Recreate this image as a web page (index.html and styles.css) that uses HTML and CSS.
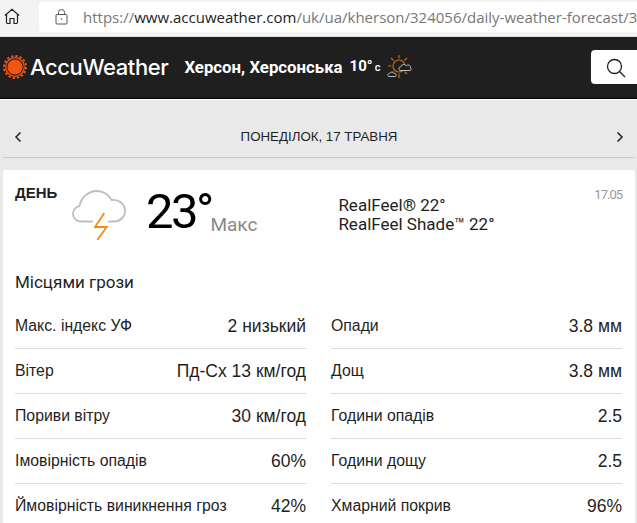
FILE: index.html
```html
<!DOCTYPE html>
<html lang="uk">
<head>
<meta charset="utf-8">
<title>AccuWeather</title>
<link rel="stylesheet" href="styles.css">
</head>
<body>
<div class="browser">
  <svg class="home" width="16" height="17" viewBox="0 0 16 17" fill="none" stroke="#222" stroke-width="1.2"><path d="M1 7.500 8 1.200l7 6.300M2.500 6.500v7.600a1.400 1.400 0 0 0 1.400 1.400H6v-5h4v5h2.100a1.400 1.400 0 0 0 1.400-1.400V6.500"/></svg>
  <div class="address">
    <svg class="lock" width="13" height="16" viewBox="0 0 13 16" fill="none" stroke="#555" stroke-width="1"><rect x="1" y="5.500" width="11" height="9.500" rx="1"/><path d="M3.500 5.500V3.500a3 3 0 0 1 6 0v2"/><circle cx="6.500" cy="10" r=".8" fill="#555" stroke="none"/></svg>
    <span class="url"><span class="url-dim">https://</span>www.accuweather.com<span class="url-dim">/uk/ua/kherson/324056/daily-weather-forecast/3</span></span>
  </div>
</div>
<header class="site-header">
  <svg class="logo-sun" width="26" height="26" viewBox="0 0 26 26"><circle cx="13" cy="13" r="7.600" fill="#f05514"/><circle cx="13" cy="13" r="9.300" fill="none" stroke="#f05514" stroke-width="1.300"/><circle cx="13" cy="13" r="11" fill="none" stroke="#f05514" stroke-width="2" stroke-dasharray="2.300 2.020"/></svg>
  <span class="logo-text">AccuWeather</span>
  <span class="location">Херсон, Херсонська</span>
  <span class="temp">10°<small>c</small></span>
  <svg class="mini-icon" width="26" height="26" viewBox="0 0 26 26" fill="none"><g stroke="#c46a0c" stroke-width="1.200"><circle cx="12" cy="12" r="6"/><path d="M12 1v3.500M12 19.500V24M1 12h3.500M4 4l2.500 2.500M20 4l-2.500 2.500M4 20l2.500-2.500M20 20l-2.500-2.500"/></g><path d="M13 16.500a2 2 0 0 1 .8-3.800 3 3 0 0 1 5.500-.8 2.300 2.300 0 0 1 4 2.200 1.300 1.300 0 0 1 .2 2.400z" fill="#1f1f1f" stroke="#bbb"/><path d="M1.500 22.500a1.500 1.500 0 0 1 .8-2.800 2.500 2.500 0 0 1 4.500-.3 1.600 1.600 0 0 1 1.500 3.100z" fill="#1f1f1f" stroke="#bbb"/></svg>
  <div class="search">
    <svg width="20" height="20" viewBox="0 0 20 20" fill="none" stroke="#1f1f1f" stroke-width="1.300"><circle cx="8.500" cy="8.500" r="7"/><path d="m13.500 13.500 5.500 5.500"/></svg>
  </div>
</header>
<main class="page">
  <nav class="day-nav">
    <svg width="8" height="12" viewBox="0 0 8 12" fill="none" stroke="#222" stroke-width="1.500"><path d="M6.500 1.500 2 6l4.500 4.500"/></svg>
    <span class="day-title">ПОНЕДІЛОК, 17 ТРАВНЯ</span>
    <svg width="8" height="12" viewBox="0 0 8 12" fill="none" stroke="#222" stroke-width="1.500"><path d="M1.500 1.500 6 6l-4.500 4.500"/></svg>
  </nav>
  <section class="card">
    <div class="card-head">
      <span class="day-label">ДЕНЬ</span>
      <svg class="storm" width="54" height="52" viewBox="0 0 54 52" fill="none"><path d="M20 31.500H8.500A7.700 7.700 0 0 1 7.500 16.200C9 7 17 1 25 1c6 0 12 3.500 14.500 9C47 9 53 14 53 21c0 6-5 10.500-11 10.500h-5" stroke="#bdbdbd" stroke-width="1.800" stroke-linecap="round"/><path d="M32.300 23 23 37h11.700L25.300 50" stroke="#f58a0b" stroke-width="1.800"/></svg>
      <span class="big-temp">23°</span>
      <span class="max">Макс</span>
      <div class="realfeel">RealFeel® 22°<br>RealFeel Shade™ 22°</div>
      <span class="date">17.05</span>
    </div>
    <p class="phrase">Місцями грози</p>
    <div class="panels">
      <div class="panel">
        <div class="row"><span class="key">Макс. індекс УФ</span><span class="val">2 низький</span></div>
        <div class="row"><span class="key">Вітер</span><span class="val">Пд-Сх 13 км/год</span></div>
        <div class="row"><span class="key">Пориви вітру</span><span class="val">30 км/год</span></div>
        <div class="row"><span class="key">Імовірність опадів</span><span class="val">60%</span></div>
        <div class="row"><span class="key">Ймовірність виникнення гроз</span><span class="val">42%</span></div>
      </div>
      <div class="panel">
        <div class="row"><span class="key">Опади</span><span class="val">3.8 мм</span></div>
        <div class="row"><span class="key">Дощ</span><span class="val">3.8 мм</span></div>
        <div class="row"><span class="key">Години опадів</span><span class="val">2.5</span></div>
        <div class="row"><span class="key">Години дощу</span><span class="val">2.5</span></div>
        <div class="row"><span class="key">Хмарний покрив</span><span class="val">96%</span></div>
      </div>
    </div>
  </section>
</main>
</body>
</html>
```
FILE: styles.css
```css
* { box-sizing: border-box; }
html, body { margin: 0; height: 523px; overflow: hidden; }
body { background: #e9e9e9; font-family: "Liberation Sans", Arial, sans-serif; color: #1f1f1f; }

.browser { height: 37px; background: #f3f3f3; display: flex; align-items: flex-start; padding: 2px 0 0 3px; border-bottom: 1px solid #dcdcdc; }
.home { margin: 6px 0 0 1px; flex: none; }
.address { margin-left: 19px; flex: 1; min-width: 0; overflow: hidden; height: 30px; background: #fff; border-radius: 4px 0 0 4px; display: flex; align-items: center; padding-left: 16px; }
.lock { flex: none; }
.url { margin-left: 15px; font: 15px/20px "Open Sans", sans-serif; color: #222; white-space: nowrap; }
.url-dim { color: #777; }

.site-header { height: 63px; background: #1f1f1f; border-bottom: 1px solid #fff; display: flex; align-items: center; padding: 0 0 2px 2px; box-shadow: inset 0 -1px 0 #000; color: #fff; }
.logo-sun { flex: none; }
.logo-text { margin-left: 2px; font: 500 22px/30px Inter, sans-serif; letter-spacing: -.4px; }
.location { margin-left: 16px; font: 700 16.800px/20px Roboto, sans-serif; }
.temp { margin-left: 7px; font: 700 15px/20px Roboto, sans-serif; }
.temp small { margin-left: 2px; font-size: 11px; font-weight: 500; }
.mini-icon { margin-left: 7px; flex: none; }
.search { margin-left: auto; width: 46px; height: 34px; background: #fff; border-radius: 4px 0 0 4px; padding: 8px 0 0 15px; }

.page { padding: 0 2px 0 3px; }
.day-nav { height: 58px; border-bottom: 1px solid #c9c9c9; display: flex; align-items: center; justify-content: space-between; padding: 17px 11px 0 11px; }
.day-title { font: 13.300px/18px "Liberation Sans", sans-serif; color: #1f1f1f; }
.card { margin-top: 12px; background: #fff; border-radius: 2px 2px 0 0; padding: 0 13px 0 12px; }
.card-head { position: relative; height: 92px; display: flex; align-items: flex-start; }
.day-label { margin-top: 15px; font: 700 15px/16px "Liberation Sans", sans-serif; width: 57px; }
.storm { margin-top: 20px; flex: none; }
.big-temp { margin: 17px 0 0 20px; font: 400 49px/50px Roboto, sans-serif; letter-spacing: -2.500px; color: #000; }
.max { margin: 43px 0 0 -1.500px; font: 19px/24px Roboto, sans-serif; color: #888; }
.realfeel { margin: 26px 0 0 81px; font: 17px/19px Roboto, sans-serif; }
.date { position: absolute; top: 17px; right: 0; font: 13px/16px Roboto, sans-serif; letter-spacing: -1px; color: #999; }
.phrase { margin: 10px 0 0; font: 17px/20px Roboto, sans-serif; }
.panels { display: flex; gap: 25px; margin-top: 12px; }
.panel { flex: 1; }
.row { height: 45px; display: flex; justify-content: space-between; align-items: center; border-bottom: 1px solid #dcdcdc; }
.key { font: 15.800px/20px "Liberation Sans", sans-serif; }
.val { font: 17.500px/20px "Liberation Sans", sans-serif; }
```
